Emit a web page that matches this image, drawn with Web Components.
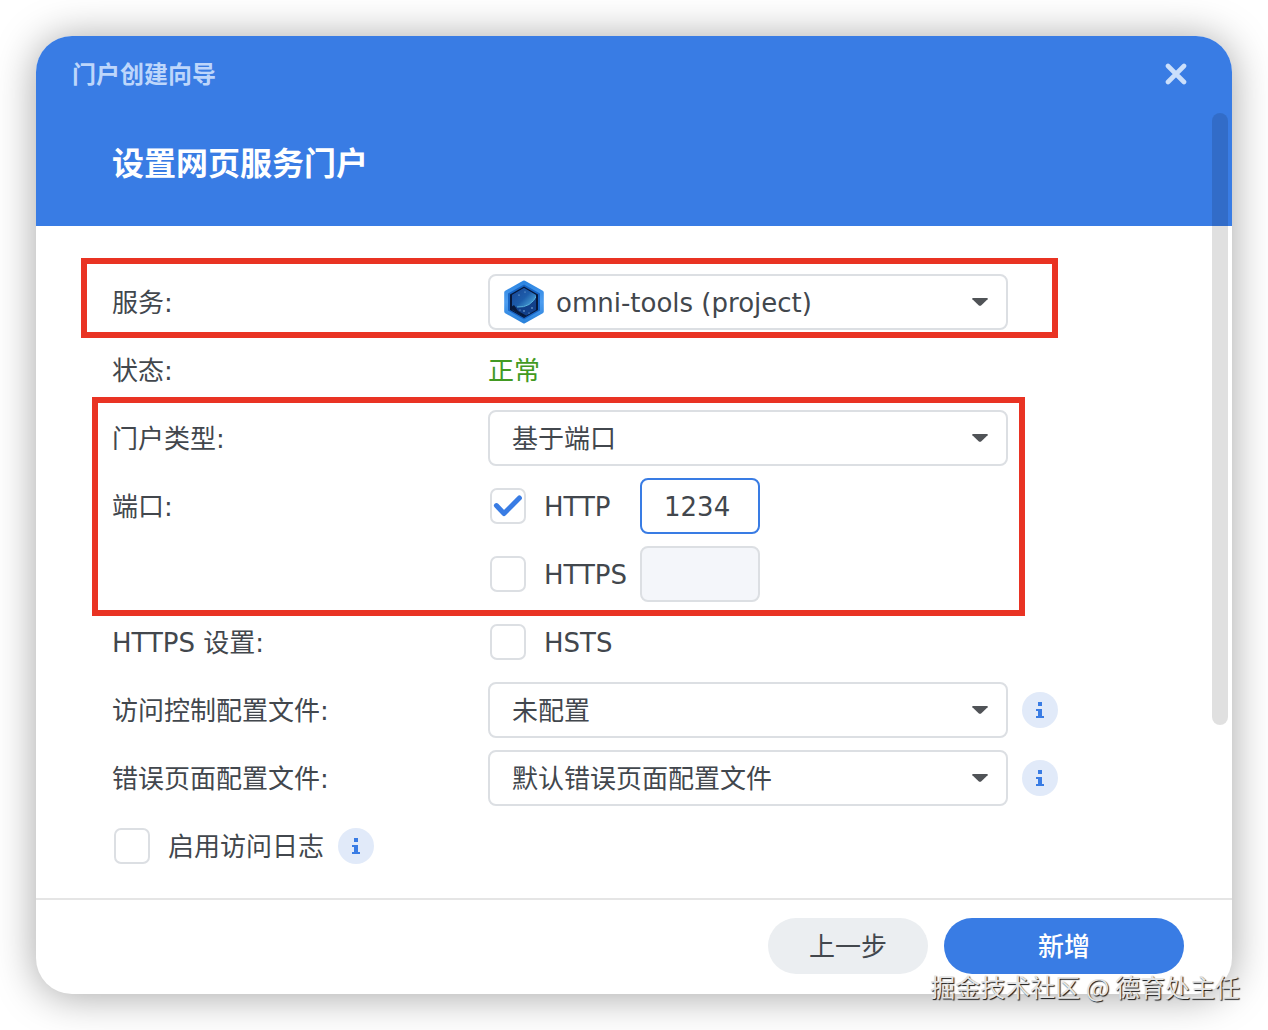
<!DOCTYPE html>
<html lang="zh-CN">
<head>
<meta charset="utf-8">
<meta name="viewport" content="width=device-width, initial-scale=1">
<title>门户创建向导</title>
<style>
    html { background: #ffffff; }

    body {
        --blue: #397ce4;
        --text: #42474d;
        --line: #dcdfe3;
        --mark: #e93323;
        /* the CJK glyphs sit high in their line, so every text box gets this on top */
        --text-drop: 2px;
        margin: 0;
        padding: 36px;
        position: relative;
        color: var(--text);
        font: 26px/36px "DejaVu Sans", "Noto Sans CJK SC", sans-serif;
    }

    .status { padding-top: var(--text-drop); color: #429a22; }
    .service-mark { --mark-inset: -16px -50px -8px -31px; }
    .port-mark { --mark-inset: -13px -17px -14px -20px; }
</style>
</head>
<body>
<wizard-dialog caption="门户创建向导" heading="设置网页服务门户">
    <mark-group class="service-mark">
        <select-field label="服务:" value="omni-tools (project)" with-icon>
            <project-icon slot="icon"></project-icon>
        </select-field>
    </mark-group>

    <form-row label="状态:"><span class="status">正常</span></form-row>

    <mark-group class="port-mark">
        <select-field label="门户类型:" value="基于端口"></select-field>
        <form-row label="端口:">
            <check-field label="HTTP" checked></check-field>
            <port-input label="HTTP 端口" value="1234"></port-input>
        </form-row>
        <form-row>
            <check-field label="HTTPS"></check-field>
            <port-input label="HTTPS 端口" disabled></port-input>
        </form-row>
    </mark-group>

    <form-row label="HTTPS 设置:"><check-field label="HSTS"></check-field></form-row>
    <select-field label="访问控制配置文件:" value="未配置"><info-tip slot="info"></info-tip></select-field>
    <select-field label="错误页面配置文件:" value="默认错误页面配置文件"><info-tip slot="info"></info-tip></select-field>
    <form-row wide>
        <check-field label="启用访问日志" fit></check-field>
        <info-tip></info-tip>
    </form-row>

    <pill-button slot="actions">上一步</pill-button>
    <pill-button slot="actions" primary>新增</pill-button>
</wizard-dialog>
<image-credit>掘金技术社区 @ 德育处主任</image-credit>

<script>
class BaseElement extends HTMLElement {
    constructor() {
        super();
        this.attachShadow({ mode: 'open' });
    }

    connectedCallback() {
        this.shadowRoot.innerHTML = this.render();
    }

    attr(name) {
        return this.getAttribute(name) || '';
    }
}

// Label column + control column, shared by every row of the form
const rowStyles = `
    :host { display: block; }
    * { box-sizing: border-box; }

    .row {
        display: grid;
        grid-template-columns: 376px minmax(0, 1fr);
        align-items: center;
        min-height: 56px;
    }

    .label { padding-top: var(--text-drop); }

    .controls {
        display: flex;
        align-items: center;
    }
`;

class WizardDialog extends BaseElement {
    render() {
        return `
        <style>
            :host {
                display: block;
                position: relative;
                border-radius: 36px;
                background: #ffffff;
                box-shadow: 0 2px 42px rgba(0, 0, 0, 0.36);
            }

            header {
                padding: 20px 38px 38px 36px;
                border-radius: 36px 36px 0 0;
                background: var(--blue);
                color: #ffffff;
            }

            .bar {
                display: flex;
                align-items: center;
                justify-content: space-between;
                height: 36px;
            }

            .caption {
                padding-top: var(--text-drop);
                color: #bdd6fb;
                font-size: 24px;
                font-weight: bold;
            }

            .close {
                display: grid;
                place-items: center;
                width: 36px;
                height: 36px;
                padding: 0;
                border: 0;
                background: none;
                color: #cbdffb;
            }

            h1 {
                margin: 46px 0 0 40px;
                padding-top: var(--text-drop);
                font-size: 32px;
                line-height: 48px;
            }

            main {
                display: grid;
                gap: 12px;
                padding: 48px 76px 24px;
            }

            footer {
                display: flex;
                justify-content: flex-end;
                gap: 16px;
                padding: 18px 48px 20px;
                border-top: 2px solid #e5e5e5;
            }

            .thumb {
                position: absolute;
                top: 77px;
                right: 4px;
                bottom: 269px;
                width: 16px;
                border-radius: 8px;
                background: rgba(0, 0, 0, 0.12);
            }
        </style>

        <header>
            <div class="bar">
                <span class="caption">${this.attr('caption')}</span>
                <button class="close" type="button" aria-label="关闭">
                    <svg width="22" height="22" viewBox="0 0 22 22" fill="none" stroke="currentColor" stroke-width="4.6" stroke-linecap="round">
                        <path d="M3 3 19 19M19 3 3 19"/>
                    </svg>
                </button>
            </div>
            <h1>${this.attr('heading')}</h1>
        </header>
        <main><slot></slot></main>
        <footer><slot name="actions"></slot></footer>
        <div class="thumb"></div>
        `;
    }
}

class FormRow extends BaseElement {
    render() {
        return `
        <style>
            ${rowStyles}
            :host([wide]) .row { display: flex; }
            :host([wide]) .controls { gap: 14px; }
        </style>
        <div class="row">
            ${this.hasAttribute('wide') ? '' : `<span class="label">${this.attr('label')}</span>`}
            <div class="controls"><slot></slot></div>
        </div>
        `;
    }
}

class SelectField extends BaseElement {
    render() {
        return `
        <style>
            ${rowStyles}
            .controls { gap: 14px; }

            .box {
                position: relative;
                flex: 0 1 520px;
                min-width: 0;
            }

            select {
                display: block;
                appearance: none;
                width: 100%;
                height: 56px;
                padding: var(--text-drop) 56px 0 22px;
                border: 2px solid var(--line);
                border-radius: 8px;
                background: #ffffff;
                color: inherit;
                font: inherit;
            }

            :host([with-icon]) select { padding-left: 66px; }

            ::slotted([slot="icon"]) {
                position: absolute;
                top: 6px;
                left: 15px;
                pointer-events: none;
            }

            .caret {
                position: absolute;
                top: 24px;
                right: 20px;
                pointer-events: none;
            }
        </style>
        <div class="row">
            <label class="label" for="field">${this.attr('label')}</label>
            <div class="controls">
                <div class="box">
                    <select id="field"><option>${this.attr('value')}</option></select>
                    <slot name="icon"></slot>
                    <svg class="caret" width="16" height="8" viewBox="0 0 16 8" fill="#505357">
                        <path d="M1 0h14q1.2.2.6 1.2L9.400 7.200q-1.400 1-2.800 0L.4 1.200Q-.2.2 1 0z"/>
                    </svg>
                </div>
                <slot name="info"></slot>
            </div>
        </div>
        `;
    }
}

class CheckField extends BaseElement {
    render() {
        return `
        <style>
            :host {
                display: block;
                width: 152px;
            }

            :host([fit]) { width: auto; }

            label {
                display: flex;
                align-items: center;
                gap: 18px;
                padding-left: 2px;
                white-space: nowrap;
            }

            .text { padding-top: var(--text-drop); }

            .box {
                display: grid;
                width: 36px;
                height: 36px;
            }

            input, svg { grid-area: 1 / 1; }

            input {
                appearance: none;
                box-sizing: border-box;
                width: 36px;
                height: 36px;
                margin: 0;
                border: 2px solid var(--line);
                border-radius: 7px;
                background: #ffffff;
            }

            svg {
                visibility: hidden;
                pointer-events: none;
                color: var(--blue);
            }

            input:checked + svg { visibility: visible; }
        </style>
        <label>
            <span class="box">
                <input type="checkbox" ${this.hasAttribute('checked') ? 'checked' : ''}>
                <svg width="36" height="36" viewBox="0 0 36 36" fill="none" stroke="currentColor" stroke-width="5" stroke-linecap="round" stroke-linejoin="round">
                    <path d="M6.4 17.600 14 25.500 29.400 10"/>
                </svg>
            </span>
            <span class="text">${this.attr('label')}</span>
        </label>
        `;
    }
}

class PortInput extends BaseElement {
    render() {
        return `
        <style>
            :host { display: block; }

            input {
                display: block;
                box-sizing: border-box;
                width: 120px;
                height: 56px;
                padding: var(--text-drop) 22px 0;
                border: 2px solid var(--blue);
                border-radius: 8px;
                background: #ffffff;
                color: inherit;
                font: inherit;
            }

            input:disabled {
                border-color: var(--line);
                background: #f4f6fa;
            }
        </style>
        <input type="text" aria-label="${this.attr('label')}" value="${this.attr('value')}" ${this.hasAttribute('disabled') ? 'disabled' : ''}>
        `;
    }
}

class InfoTip extends BaseElement {
    render() {
        return `
        <style>
            :host { display: block; }

            button {
                display: block;
                width: 36px;
                height: 36px;
                padding: 0;
                border: 0;
                border-radius: 50%;
                background: #e1eaf9;
                color: var(--blue);
            }

            svg { display: block; }
        </style>
        <button type="button" aria-label="说明">
            <svg width="36" height="36" viewBox="0 0 36 36" fill="currentColor">
                <path d="M16 10h4v4h-4zM14 17h6v7h2v2h-8v-2h2v-5h-2z"/>
            </svg>
        </button>
        `;
    }
}

class PillButton extends BaseElement {
    render() {
        return `
        <style>
            :host { display: block; }

            button {
                display: block;
                width: 160px;
                height: 56px;
                padding: var(--text-drop) 0 0;
                border: 0;
                border-radius: 28px;
                background: #ebeef1;
                color: inherit;
                font: inherit;
            }

            :host([primary]) button {
                width: 240px;
                background: var(--blue);
                color: #ffffff;
                font-weight: 500;
            }
        </style>
        <button type="button"><slot></slot></button>
        `;
    }
}

// Red frame drawn over a run of rows, --mark-inset says how far it reaches past them
class MarkGroup extends BaseElement {
    render() {
        return `
        <style>
            :host {
                display: grid;
                gap: 12px;
                position: relative;
                width: 100%;
                max-width: 896px;
            }

            .frame {
                position: absolute;
                inset: var(--mark-inset);
                border: 6px solid var(--mark);
                pointer-events: none;
            }
        </style>
        <slot></slot>
        <div class="frame"></div>
        `;
    }
}

class ProjectIcon extends BaseElement {
    render() {
        return `
        <style>
            :host { display: block; }
            svg { display: block; }
        </style>
        <svg width="42" height="44" viewBox="0 0 42 44">
            <defs>
                <linearGradient id="rim" x1="0" y1="0" x2="0" y2="1">
                    <stop offset="0" stop-color="#2d86e2"/>
                    <stop offset="0.5" stop-color="#4d9df0"/>
                    <stop offset="1" stop-color="#2b83dc"/>
                </linearGradient>
                <linearGradient id="planet" x1="0" y1="0" x2="1" y2="1">
                    <stop offset="0.3" stop-color="#173d8c"/>
                    <stop offset="0.7" stop-color="#1d5dab"/>
                    <stop offset="0.9" stop-color="#4aa3d8"/>
                </linearGradient>
                <clipPath id="hole"><path d="M21 8 33 15v15L21 37 9 30V15z"/></clipPath>
            </defs>
            <path fill="url(#rim)" stroke="url(#rim)" stroke-width="4" stroke-linejoin="round" d="M21 2.500 38.800 12.500v19L21 41.500 3.200 31.500v-19z"/>
            <path fill="#1764c4" d="M21 4.500 37 13.500v17L21 39.500 5 30.500v-17z"/>
            <path fill="#07183a" d="M21 6.500 35 14.500v15.500L21 38 7 30V14.500z"/>
            <g clip-path="url(#hole)">
                <path fill="#12408a" d="M8 7h26v31H8z"/>
                <circle cx="16" cy="8" r="19" fill="url(#planet)"/>
                <path fill="none" stroke="#5bb4dd" stroke-width="1" d="M14 27q14 1 20-12"/>
                <path fill="#071a3c" d="M7 28 21 38l3-2-9-5-4-6z"/>
            </g>
            <g fill="#a8d5fa">
                <circle cx="16" cy="15" r="0.600"/><circle cx="22" cy="12" r="0.500"/>
                <circle cx="21" cy="31" r="0.700"/><circle cx="29" cy="28" r="0.700"/>
                <circle cx="26" cy="33" r="0.500"/><circle cx="17" cy="30" r="0.500"/>
            </g>
        </svg>
        `;
    }
}

class ImageCredit extends BaseElement {
    render() {
        return `
        <style>
            :host {
                display: block;
                position: absolute;
                right: 28px;
                bottom: 26px;
                color: #e4e4e4;
                font: 25px/36px "Noto Sans CJK SC", sans-serif;
                white-space: nowrap;
                text-shadow: 1px 1px 1px #111111;
                pointer-events: none;
            }
        </style>
        <slot></slot>
        `;
    }
}

customElements.define('wizard-dialog', WizardDialog);
customElements.define('form-row', FormRow);
customElements.define('select-field', SelectField);
customElements.define('check-field', CheckField);
customElements.define('port-input', PortInput);
customElements.define('info-tip', InfoTip);
customElements.define('pill-button', PillButton);
customElements.define('mark-group', MarkGroup);
customElements.define('project-icon', ProjectIcon);
customElements.define('image-credit', ImageCredit);
</script>
</body>
</html>
